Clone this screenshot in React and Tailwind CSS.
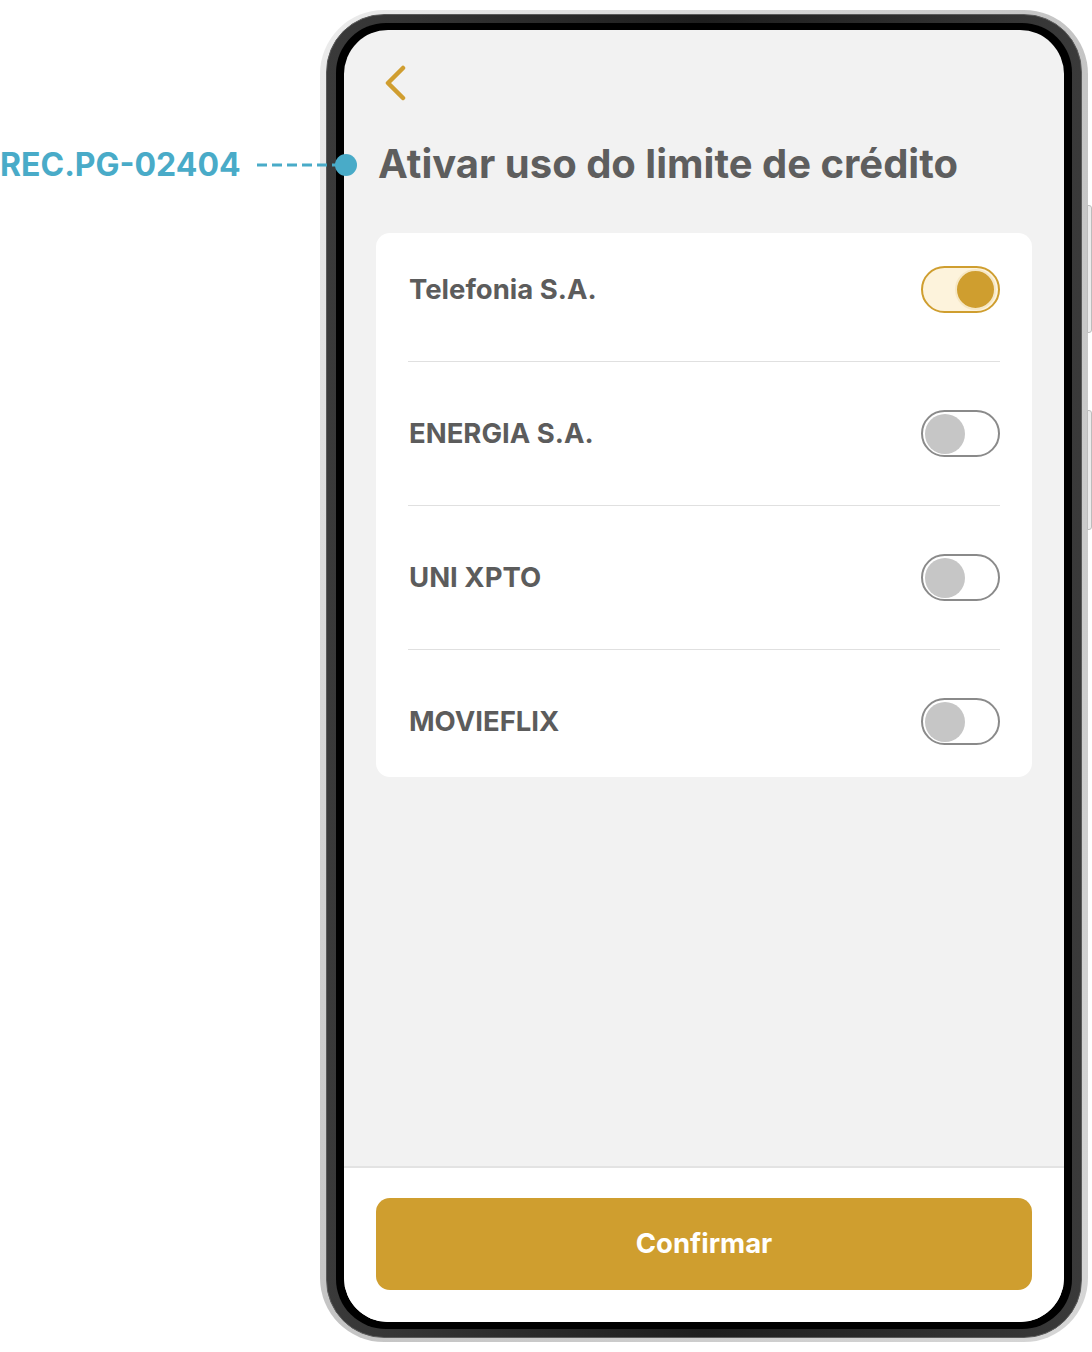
import React, { useState } from "react";

const companies = [
    { id: 1, name: "Telefonia S.A.", on: true },
    { id: 2, name: "ENERGIA S.A.", on: false },
    { id: 3, name: "UNI XPTO", on: false },
    { id: 4, name: "MOVIEFLIX", on: false },
];

const Toggle = ({ on, onClick }) => {
    return (
        <button
            onClick={onClick}
            className={
                on
                    ? "flex h-[47px] w-[79px] items-center justify-end rounded-full border-2 border-[#cf9e2f] bg-[#fdf3dc] px-[2px]"
                    : "flex h-[47px] w-[79px] items-center justify-start rounded-full border-2 border-[#8a8a8a] bg-white px-[2px]"
            }
        >
            {on ? (
                <span className="h-[41px] w-[41px] rounded-full border-2 border-[#f6e7c4] bg-[#cf9e2f]" />
            ) : (
                <span className="h-[40px] w-[40px] rounded-full bg-[#c6c6c6]" />
            )}
        </button>
    );
};

const App = () => {
    const [items, setItems] = useState(companies);

    const toggle = (id) => {
        setItems(items.map(item => item.id === id ? { ...item, on: !item.on } : item));
    };

    return (
        <div className="relative h-[1352px] w-[1092px] bg-white" style={{ fontFamily: "Inter, 'Noto Sans', sans-serif" }}>
            <div className="flex pl-[320px] pt-[10px]">
                {/* phone frame */}
                <div className="relative h-[1332px] w-[768px] rounded-[64px] bg-gradient-to-br from-[#ececec] via-[#c4c4c4] to-[#d6d6d6] px-[6px] py-[4px]">
                    <div className="h-full w-full rounded-[58px] border border-[#5a5a5a] bg-gradient-to-r from-[#3a3a3a] via-[#1e1e1e] to-[#3a3a3a] px-[9px] py-[8px]">
                        <div className="h-full w-full rounded-[50px] bg-black px-[8px] py-[7px]">
                            <div className="flex h-full w-full flex-col overflow-hidden rounded-[44px] bg-[#f2f2f2]">
                                <div className="flex-1 px-[32px]">
                                    <div className="pl-[7px] pt-[35px]">
                                        <svg width="24" height="36" viewBox="0 0 24 36" fill="none">
                                            <path d="M20 3 L5 18 L20 33" stroke="#d09e30" strokeWidth="4.5" strokeLinecap="round" strokeLinejoin="round" />
                                        </svg>
                                    </div>
                                    <h1 className="mt-[39px] pl-[2px] text-[40px] font-bold leading-[48px] text-[#5e5e5e]">
                                        Ativar uso do limite de crédito
                                    </h1>
                                    <div className="mt-[45px] rounded-[14px] bg-white px-[32px] pb-[32px] pt-[33px]">
                                        {items.map((item, i) => (
                                            <div key={item.id}>
                                                {i > 0 && <div className="my-[48px] h-px bg-[#e0e0e0]" />}
                                                <div className="flex h-[47px] items-center justify-between">
                                                    <span className="pl-[1px] text-[27.5px] font-bold text-[#5c5c5c]">{item.name}</span>
                                                    <Toggle on={item.on} onClick={() => toggle(item.id)} />
                                                </div>
                                            </div>
                                        ))}
                                    </div>
                                </div>
                                <div className="border-t-2 border-[#e3e3e3] bg-white px-[32px] pb-[32px] pt-[30px]">
                                    <button className="flex h-[92px] w-full items-center justify-center rounded-[14px] bg-[#cf9e2f] text-[27.5px] font-bold text-white">
                                        Confirmar
                                    </button>
                                </div>
                            </div>
                        </div>
                    </div>
                    {/* side buttons */}
                    <div className="absolute right-[-4px] top-[195px] h-[128px] w-[5px] rounded-r-[3px] border border-[#bdbdbd] bg-[#ececec]" />
                    <div className="absolute right-[-4px] top-[400px] h-[120px] w-[5px] rounded-r-[3px] border border-[#bdbdbd] bg-[#ececec]" />
                </div>
            </div>

            {/* annotation */}
            <div className="absolute left-0 top-[145px] flex h-[40px] items-center">
                <span className="text-[32px] font-bold leading-[40px] text-[#49abc8]">REC.PG-02404</span>
                <svg className="ml-[16px]" width="79" height="4" viewBox="0 0 79 4">
                    <line x1="0" y1="2" x2="79" y2="2" stroke="#49abc8" strokeWidth="3" strokeDasharray="10 5" />
                </svg>
                <div className="ml-[-1px] h-[22px] w-[22px] rounded-full bg-[#49abc8]" />
            </div>
        </div>
    );
};

export default App;
